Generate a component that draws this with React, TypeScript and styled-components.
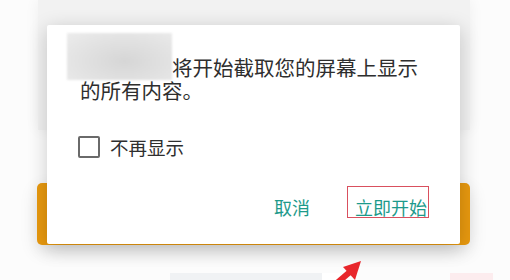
import React from "react";
import styled, { createGlobalStyle } from "styled-components";

const Global = createGlobalStyle`
  html, body { margin: 0; padding: 0; background: #fcfcfc; }
  body { font-family: "Noto Sans CJK SC", "Noto Sans", sans-serif; }
`;

const Stage = styled.div`
  position: relative;
  width: 510px;
  height: 280px;
  overflow: hidden;
  background: #fcfcfc;
`;

const Backdrop = styled.div`
  display: flex;
  flex-direction: column;
  padding: 0 40px 0 37px;
  height: 100%;
  box-sizing: border-box;
`;

const BackPanel = styled.div`
  height: 130px;
  margin-left: 1px;
  background: #f2f2f2;
  box-shadow: 0 0 14px rgba(0, 0, 0, 0.06);
`;

const OrangeCard = styled.div`
  margin-top: 53px;
  height: 62px;
  border-radius: 5px;
  background: #e8990f;
  box-shadow: 0 6px 18px rgba(0, 0, 0, 0.12);
`;

const BottomRow = styled.div`
  display: flex;
  margin-top: 28px;
  margin-right: -40px;
  height: 7px;
  padding-left: 133px;
`;

const Strip = styled.div<{ $w: number; $c: string; $ml?: number }>`
  flex: none;
  width: ${(p) => p.$w}px;
  margin-left: ${(p) => p.$ml ?? 0}px;
  background: ${(p) => p.$c};
`;

const Dialog = styled.div`
  position: absolute;
  left: 47px;
  top: 25px;
  width: 413px;
  box-sizing: border-box;
  padding: 30px 31px 26px 33px;
  background: #fff;
  border-radius: 2px;
  box-shadow: 0 4px 20px rgba(0, 0, 0, 0.2);
  display: flex;
  flex-direction: column;
`;

const Message = styled.p`
  margin: 0;
  font-size: 20.5px;
  line-height: 23px;
  color: #2e2e2e;
`;

const Redacted = styled.span`
  position: relative;
  display: inline-block;
  width: 92px;
  height: 1em;
  &::before {
    content: "";
    position: absolute;
    left: -13px;
    right: 0;
    top: -22px;
    bottom: -4px;
    background: radial-gradient(ellipse at 55% 60%, #d6d6d6 0%, #e2e2e2 55%, #ececec 100%);
    filter: blur(1px);
  }
`;

const CheckRow = styled.label`
  display: flex;
  align-items: center;
  gap: 10px;
  margin-top: 34px;
  margin-left: -2px;
  height: 23px;
  font-size: 18.5px;
  color: #2e2e2e;
`;

const Box = styled.span`
  width: 18px;
  height: 18px;
  border: 2px solid #6a6a6a;
  border-radius: 2px;
`;

const Actions = styled.div`
  display: flex;
  justify-content: flex-end;
  align-items: flex-end;
  gap: 35px;
  margin-top: 27px;
`;

const ActionButton = styled.button<{ $marked?: boolean }>`
  font-family: inherit;
  font-size: 18px;
  line-height: 18px;
  color: #1d9a8b;
  background: none;
  border: 1px solid ${(p) => (p.$marked ? "#d9505e" : "transparent")};
  padding: 11px 1px 1px 7px;
  cursor: pointer;
`;

const Arrow = styled.svg`
  position: absolute;
  left: 330px;
  top: 255px;
`;

export default function App() {
  return (
    <Stage>
      <Global />
      <Backdrop>
        <BackPanel />
        <OrangeCard />
        <BottomRow>
          <Strip $w={152} $c="#f0f2f4" />
          <Strip $w={18} $c="#ffffff" />
          <Strip $w={43} $c="#fcecee" $ml={110} />
        </BottomRow>
      </Backdrop>
      <Dialog>
        <Message>
          <Redacted />
          将开始截取您的屏幕上显示的所有内容。
        </Message>
        <CheckRow>
          <Box />
          不再显示
        </CheckRow>
        <Actions>
          <ActionButton>取消</ActionButton>
          <ActionButton $marked>立即开始</ActionButton>
        </Actions>
      </Dialog>
      <Arrow width="40" height="25" viewBox="0 0 40 25">
        <line x1="7" y1="28" x2="21" y2="16" stroke="#e8262b" strokeWidth="6" />
        <polygon points="31,6 13,12 25,25" fill="#e8262b" />
      </Arrow>
    </Stage>
  );
}
